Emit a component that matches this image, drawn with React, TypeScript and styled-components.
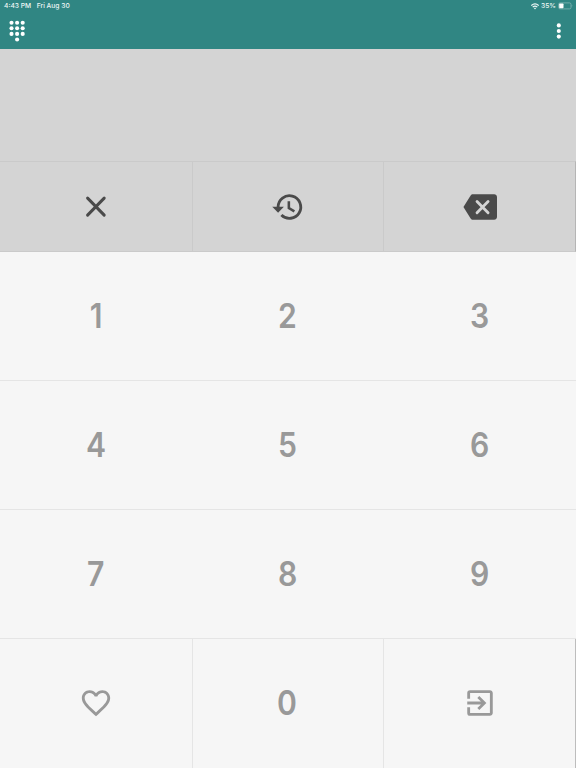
import React from "react";
import styled, { createGlobalStyle } from "styled-components";
import { MdExitToApp, MdFavoriteBorder } from "react-icons/md";

const GlobalStyle = createGlobalStyle`
  * { box-sizing: border-box; }
  body { margin: 0; background: #f6f6f6; }
`;

const Screen = styled.main`
  display: flex;
  flex-direction: column;
  height: 768px;
  overflow: hidden;
  font-family: Inter, sans-serif;
`;

const Header = styled.header`
  height: 49px;
  flex: none;
  background: #308683;
  color: #fff;
`;

const StatusBar = styled.div`
  display: flex;
  align-items: center;
  height: 12px;
  padding: 0 3px 0 4px;
  font: 500 6.7px/12px Inter, sans-serif;
  color: #eef7f6;
`;

const DateText = styled.span`
  margin-left: 5.5px;
`;

const StatusIcons = styled.div`
  display: flex;
  align-items: center;
  gap: 2px;
  margin-left: auto;
`;

const Toolbar = styled.div`
  display: flex;
  align-items: center;
  justify-content: space-between;
  height: 37px;
  padding: 0 14px 0 9px;
`;

const BarButton = styled.button`
  display: flex;
  padding: 0;
  border: 0;
  background: none;
  color: inherit;
`;

const Display = styled.section`
  height: 112px;
  flex: none;
  background: #d4d4d4;
`;

const Row = styled.div<{ $height: number }>`
  display: grid;
  grid-template-columns: 192.5px 191.5px 192px;
  flex: none;
  height: ${(p) => p.$height}px;
`;

const ActionKey = styled.button`
  display: flex;
  align-items: center;
  justify-content: center;
  padding: 0;
  border: 0 solid #cacaca;
  border-width: 1px 1px 1px 0;
  background: #d4d4d4;
  color: #4a4a4a;
  &:last-child { border-right-color: #b5b5b5; }
`;

const Key = styled.button<{ $divided?: boolean }>`
  display: flex;
  align-items: center;
  justify-content: center;
  padding: 0;
  border: 0 solid #e5e5e5;
  border-bottom-width: ${(p) => (p.$divided ? 0 : 1)}px;
  border-right-width: ${(p) => (p.$divided ? 1 : 0)}px;
  background: #f6f6f6;
  color: #999;
  font: 600 33.5px/40px Inter, sans-serif;
  &:last-child { border-right-color: #bdbdbd; }
`;

const Digit = styled.span<{ $up?: number }>`
  margin: 0 1px ${(p) => p.$up ?? 0}px 0;
  transform: scaleX(0.9);
`;

const KeyIcon = styled.span<{ $left?: number; $up?: number }>`
  display: flex;
  margin: 0 ${(p) => p.$left ?? 0}px ${(p) => p.$up ?? 0}px 0;
`;

const DialpadIcon = () => (
  <svg width="17" height="23" viewBox="0 0 17 23" fill="currentColor">
    {[3.7, 9.3, 14.9].map((y) =>
      [2.5, 8.1, 13.7].map((x) => <circle key={`${x}-${y}`} cx={x} cy={y} r="2.05" />)
    )}
    <circle cx="8.1" cy="20.5" r="2.05" />
  </svg>
);

const MoreIcon = () => (
  <svg width="6" height="18" viewBox="0 0 6 18" fill="currentColor">
    {[3.4, 9, 14.6].map((y) => <circle key={y} cx="2.8" cy={y} r="2.05" />)}
  </svg>
);

const WifiIcon = () => (
  <svg width="8" height="7" viewBox="0 0 8 7" fill="none" stroke="currentColor" strokeWidth="1.2">
    <path d="M.3 2.5Q4-.7 7.7 2.5M1.7 4.1Q4 2.2 6.3 4.1" />
    <path d="M2.8 5.1Q4 4.2 5.2 5.1L4 6.4Z" fill="currentColor" stroke="none" />
  </svg>
);

const BatteryIcon = () => (
  <svg width="15" height="8" viewBox="0 0 15 8">
    <rect x=".6" y=".9" width="12.4" height="6" rx="1.5" fill="none" stroke="#8dbdbb" strokeWidth=".7" />
    <rect x="1.2" y="1.5" width="4.3" height="4.8" rx=".7" fill="#fff" />
    <path d="M13.8 2.8q1 .9 0 2.2z" fill="#8dbdbb" />
  </svg>
);

const CloseIcon = () => (
  <svg width="34" height="34" viewBox="0 0 34 34" stroke="currentColor" strokeWidth="3" strokeLinecap="round">
    <path d="M8.6 8.1 25.2 25.1M25.2 8.1 8.6 25.1" />
  </svg>
);

const HistoryIcon = () => (
  <svg width="34" height="34" viewBox="0 0 24 24" fill="none" stroke="currentColor" strokeWidth="2">
    <path d="M5 12a8 8 0 1 1 2.34 5.66" />
    <path d="M12.6 8v4.8l3.9 2.3" strokeWidth="1.8" />
    <path d="M.9 11.8h8.2L5 16.1z" fill="currentColor" stroke="none" />
  </svg>
);

const BackspaceIcon = () => (
  <svg width="34" height="34" viewBox="0 0 24 24">
    <path fill="currentColor" d="M22 3H7c-.69 0-1.23.35-1.59.88L.3 12l5.11 8.11c.36.53.9.89 1.59.89h15c1.1 0 2-.9 2-2V5c0-1.1-.9-2-2-2z" />
    <path d="M9.9 8.2 17.7 16M17.7 8.2 9.9 16" stroke="#d4d4d4" strokeWidth="2" strokeLinecap="round" />
  </svg>
);

const digitRows = [["1", "2", "3"], ["4", "5", "6"], ["7", "8", "9"]];

export default function App() {
  return (
    <>
      <GlobalStyle />
      <Screen>
        <Header>
          <StatusBar>
            <span>4:43 PM</span>
            <DateText>Fri Aug 30</DateText>
            <StatusIcons>
              <WifiIcon />
              <span>35%</span>
              <BatteryIcon />
            </StatusIcons>
          </StatusBar>
          <Toolbar>
            <BarButton aria-label="Dialpad"><DialpadIcon /></BarButton>
            <BarButton aria-label="More options"><MoreIcon /></BarButton>
          </Toolbar>
        </Header>
        <Display />
        <Row $height={91}>
          <ActionKey aria-label="Clear"><KeyIcon><CloseIcon /></KeyIcon></ActionKey>
          <ActionKey aria-label="History"><KeyIcon><HistoryIcon /></KeyIcon></ActionKey>
          <ActionKey aria-label="Delete"><KeyIcon><BackspaceIcon /></KeyIcon></ActionKey>
        </Row>
        {digitRows.map((digits) => (
          <Row $height={129} key={digits[0]}>
            {digits.map((digit) => <Key key={digit}><Digit>{digit}</Digit></Key>)}
          </Row>
        ))}
        <Row $height={129}>
          <Key $divided aria-label="Favorites"><KeyIcon $up={1}><MdFavoriteBorder size={34} /></KeyIcon></Key>
          <Key $divided><Digit $up={2}>0</Digit></Key>
          <Key $divided aria-label="Enter"><KeyIcon $up={1}><MdExitToApp size={34} /></KeyIcon></Key>
        </Row>
      </Screen>
    </>
  );
}
